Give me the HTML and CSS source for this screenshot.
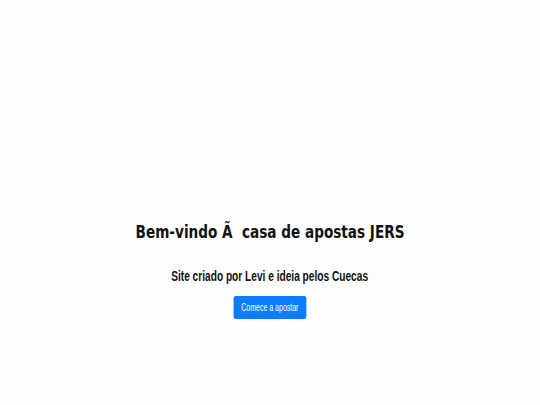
FILE: index.html
```html
<!DOCTYPE html>
<html lang="pt">
<head>
    <meta charset="UTF-8">
    <meta name="viewport" content="width=device-width, initial-scale=1.0">
    <title>JERS</title>
    <link rel="stylesheet" href="styles.css">
</head>
<body>

    <div class="container">
        <h1>Bem-vindo Ã&nbsp; casa de apostas JERS</h1>
        <h2>Site criado por Levi e ideia pelos Cuecas</h2>
        <button class="start">Comece a apostar</button>
    </div>

</body>
</html>
```

FILE: styles.css
```css
body {
    margin: 0;
    padding: 0;
    background-color: #fdfdfd;
    text-align: center;
}

.container {
    padding-top: 221px;
    display: flex;
    flex-direction: column;
    align-items: center;
}

/* the original page was squeezed sideways, so the text is narrowed */
h1 {
    font-family: "DejaVu Sans", sans-serif;
    font-size: 17px;
    line-height: 22px;
    font-weight: bold;
    color: #111;
    margin: 0;
    white-space: nowrap;
    transform: scaleX(0.8);
}

h2 {
    font-family: "Liberation Sans", Arial, sans-serif;
    font-size: 14.5px;
    line-height: 17px;
    font-weight: bold;
    color: #111;
    margin: 25px 0 0;
    white-space: nowrap;
    transform: scaleX(0.7);
}

.start {
    font-family: "Liberation Sans", Arial, sans-serif;
    font-size: 10px;
    line-height: 11px;
    color: white;
    background-color: #0d7cfd;
    border: none;
    border-radius: 3px;
    padding: 6px 11px;
    margin-top: 11px;
    cursor: pointer;
    transform: scaleX(0.7);
}
```
